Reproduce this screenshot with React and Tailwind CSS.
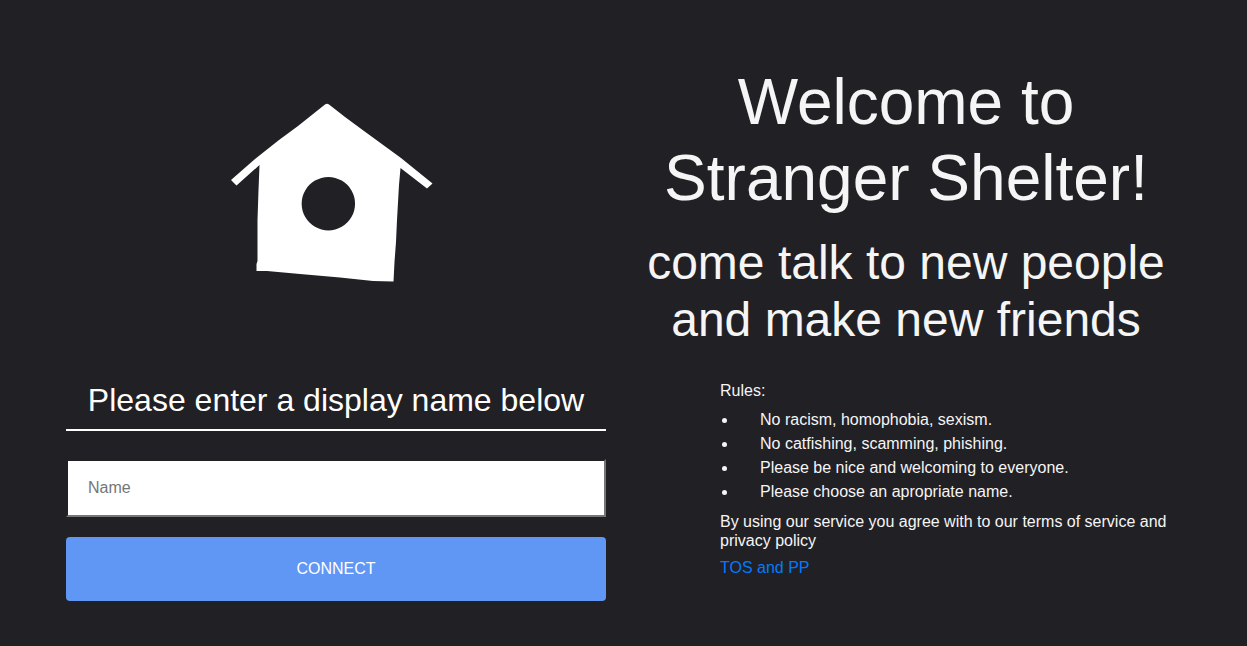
const rules = [
  "No racism, homophobia, sexism.",
  "No catfishing, scamming, phishing.",
  "Please be nice and welcoming to everyone.",
  "Please choose an apropriate name.",
];

function BirdhouseLogo() {
  return (
    <svg className="mx-auto block h-[200px] w-[212px]" viewBox="230 93 212 200" role="img" aria-label="Stranger Shelter">
      <path
        fill="#fff"
        fillRule="evenodd"
        d="M325 104.5Q327 103 329 104.5L345 117L364 131L401 158L432.5 183.5L427 188.5L400.5 168L399 185L397 220L396 242L394.5 262L393.5 281.500L373 281L340 277.500L300 274L267 271H256.5V264L257.5 261V220L258.5 190L259.5 165L236.5 185.5L231 180L255 159L279 140L298 126ZM328.3 177a26.7 26.7 0 1 0 0.1 0Z"
      />
    </svg>
  );
}

export default function App() {
  return (
    <main className="min-h-screen bg-[#212025] px-4 pt-16 pb-11 font-['Liberation_Sans',Arial,sans-serif] text-base text-white">
      <div className="mx-auto grid max-w-[1115px] grid-cols-2 gap-x-[30px] pr-[5px]">
        <section className="pt-[29px]">
          <BirdhouseLogo />
          <form onSubmit={(e) => e.preventDefault()}>
            <label htmlFor="name" className="mt-[83px] block border-b-2 border-white pb-[5px] text-center text-[32px] leading-[48px]">
              Please enter a display name below
            </label>
            <input
              id="name"
              placeholder="Name"
              className="mt-7 block h-[58px] w-full border-2 border-t-[#212025] border-r-[#767676] border-b-[#767676] border-l-[#212025] bg-white bg-clip-padding px-5 text-black placeholder:text-[#757575]"
            />
            <button className="mt-5 block h-16 w-full rounded bg-[#6097f4]">CONNECT</button>
          </form>
        </section>
        <section className="text-[#f5f5f5]">
          <h1 className="text-center text-[64px] leading-[76px]">Welcome to Stranger Shelter!</h1>
          <h2 className="mt-[18px] text-center text-[48px] leading-[57px]">come talk to new people and make new friends</h2>
          <div className="mt-[33px] pl-[84px] leading-[19px]">
            <p>Rules:</p>
            <ul className="my-2 list-disc leading-6">
              {rules.map((rule) => (
                <li key={rule} className="ml-[18px] pl-[22px]">{rule}</li>
              ))}
            </ul>
            <p>By using our service you agree with to our terms of service and privacy policy</p>
            <a href="#terms" className="mt-2 block w-fit text-[#007bff]">TOS and PP</a>
          </div>
        </section>
      </div>
    </main>
  );
}
